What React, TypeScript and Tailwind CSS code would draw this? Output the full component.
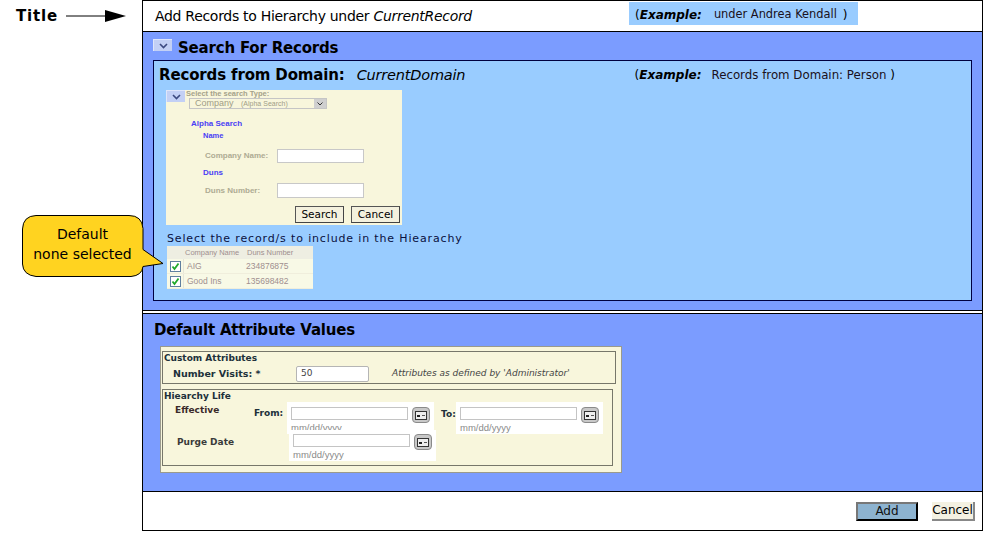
import React from 'react';

const sans = 'font-["DejaVu_Sans",sans-serif]';

function Chevron({ className }: { className: string }) {
  return (
    <div className={`flex items-center justify-center bg-[#c3d0f5] border-t border-l border-[#dfe6fa] ${className}`}>
      <svg width="9" height="6" viewBox="0 0 9 6">
        <path d="M1 1l3.500 3.500L8 1" fill="none" stroke="#3c4a80" strokeWidth="1.600" />
      </svg>
    </div>
  );
}

function CalendarButton() {
  return (
    <div className="flex h-[16px] w-[18px] items-center justify-center rounded-[4px] border border-[#8a8a8a] bg-[#c8c8c8]">
      <svg width="12" height="9" viewBox="0 0 12 9">
        <rect x="0.5" y="0.5" width="11" height="8" fill="#eee" stroke="#333" />
        <rect x="2" y="4" width="3" height="2" fill="#222" />
        <rect x="7" y="4" width="3" height="1" fill="#555" />
      </svg>
    </div>
  );
}

function DateField({ top }: { top: string }) {
  return (
    <div className={`flex gap-[4px] bg-white px-[4px] ${top}`}>
      <div>
        <div className="h-[13px] w-[117px] border border-[#c4c4c4] bg-white" />
        <div className='mt-[1px] text-[9.500px] leading-[13px] text-[#8a8a8a] font-["Liberation_Sans",sans-serif]'>mm/dd/yyyy</div>
      </div>
      <CalendarButton />
    </div>
  );
}

function PanelButton({ label }: { label: string }) {
  return (
    <div className={`flex h-[17px] w-[49px] items-center justify-center border border-t-[#555] border-l-[#555] border-r-[#444] border-b-[#444] bg-[#f4f1de] text-[10.500px] text-black ${sans}`}>
      {label}
    </div>
  );
}

function SearchPanel() {
  return (
    <div className='ml-[12px] mt-[3px] h-[135px] w-[236px] bg-[#f8f6dc] font-["Liberation_Sans",sans-serif]'>
      <div className="flex">
        <Chevron className="h-[12px] w-[19px]" />
        <div>
          <div className="ml-[1px] text-[7.500px] font-bold leading-[8px] text-[#a5a28a]">Select the search Type:</div>
          <div className="ml-[4px] flex h-[11px] w-[138px] items-center justify-between border border-[#c5c5c5] bg-[#f8f6dc] pl-[5px] text-[#a09d86]">
            <span className="text-[9px] leading-[9px]">
              Company <span className="ml-[5px] text-[7px]">(Alpha Search)</span>
            </span>
            <span className="flex h-[9px] w-[12px] items-center justify-center bg-[#cfcfcf]">
              <svg width="6" height="4" viewBox="0 0 6 4"><path d="M.5.5L3 3 5.500.5" fill="none" stroke="#333" /></svg>
            </span>
          </div>
        </div>
      </div>
      <div className="ml-[25px] mt-[10px] text-[8px] font-bold leading-[10px] text-[#4a40f5]">Alpha Search</div>
      <div className="ml-[37px] mt-[2px] text-[7.500px] font-bold leading-[10px] text-[#4a40f5]">Name</div>
      <div className="ml-[39px] mt-[8px] flex items-center">
        <span className="w-[72px] text-[8px] font-bold text-[#aeab93]">Company Name:</span>
        <div className="h-[14px] w-[87px] border border-[#c8c8c8] bg-white" />
      </div>
      <div className="ml-[37px] mt-[5px] text-[8px] font-bold leading-[10px] text-[#4a40f5]">Duns</div>
      <div className="ml-[39px] mt-[5px] flex items-center">
        <span className="w-[72px] text-[8px] font-bold text-[#aeab93]">Duns Number:</span>
        <div className="h-[15px] w-[87px] border border-[#c8c8c8] bg-white" />
      </div>
      <div className="mr-[2px] mt-[8px] flex justify-end gap-[7px]">
        <PanelButton label="Search" />
        <PanelButton label="Cancel" />
      </div>
    </div>
  );
}

function RecordRow({ name, duns }: { name: string; duns: string }) {
  return (
    <div className="flex h-[15px] items-center border-b border-[#f0eedc] bg-[#f8f9e6]">
      <div className="flex h-full w-[17px] justify-center items-center border-r border-[#e6e6d8]">
        <div className="flex h-[11px] w-[11px] items-center justify-center border border-[#5f7f9f] bg-white">
          <svg width="9" height="9" viewBox="0 0 9 9"><path d="M1.500 4.500l2 2.500 4-5.500" fill="none" stroke="#1fa82a" strokeWidth="1.800" /></svg>
        </div>
      </div>
      <span className="ml-[3px] w-[59px] text-[8.500px] text-[#a08f8f]">{name}</span>
      <span className="text-[8.500px] text-[#a08f8f]">{duns}</span>
    </div>
  );
}

function RecordsTable() {
  return (
    <div className='ml-[13px] h-[43px] w-[146px] border-b border-[#c0c0b0] bg-white font-["Liberation_Sans",sans-serif]'>
      <div className="flex h-[13px] items-center bg-[#eeeee2] pl-[18px] text-[7.500px] text-[#a08f8f]">
        <span className="w-[62px]">Company Name</span>
        <span>Duns Number</span>
      </div>
      <RecordRow name="AIG" duns="234876875" />
      <RecordRow name="Good Ins" duns="135698482" />
    </div>
  );
}

function AttributesPanel() {
  return (
    <div className={`ml-[17px] mt-[6px] h-[127px] w-[462px] border border-[#9a9a8c] bg-[#f8f6dc] px-[1px] pt-[4px] text-[9px] ${sans}`}>
      <div className="h-[33px] w-[454px] border border-[#77776a] pl-[1px]">
        <div className="text-[9px] font-bold leading-[12px] text-[#20303a]">Custom Attributes</div>
        <div className="mt-[2px] flex items-center">
          <span className="ml-[9px] w-[123px] text-[9.500px] font-bold text-[#20303a]">Number Visits: *</span>
          <div className="flex h-[16px] w-[73px] items-center rounded-[2px] border border-[#b5b5b5] bg-white pl-[4px] text-[9px] text-[#444]">50</div>
          <span className="ml-[23px] text-[9px] italic text-[#444]">Attributes as defined by 'Administrator'</span>
        </div>
      </div>
      <div className="mt-[5px] h-[77px] w-[451px] border border-[#77776a] pl-[1px]">
        <div className="text-[9px] font-bold leading-[12px] text-[#20303a]">Hiearchy Life</div>
        <div className="flex items-start">
          <div className="ml-[11px] w-[79px] pt-[2px] text-[9px] font-bold text-[#3a2a2a]">Effective</div>
          <div className="mt-[5px] w-[33px] text-[9px] font-bold text-[#20303a]">From:</div>
          <DateField top="pt-[5px]" />
          <div className="ml-[7px] mt-[6px] w-[15px] text-[9px] font-bold text-[#20303a]">To:</div>
          <DateField top="pt-[5px]" />
        </div>
        <div className="-mt-[4px] flex items-start">
          <div className="ml-[13px] w-[112px] pt-[6px] text-[9px] font-bold text-[#3a3a3a]">Purge Date</div>
          <DateField top="pt-[4px]" />
        </div>
      </div>
    </div>
  );
}

export default function App() {
  return (
    <div className={`relative flex h-[544px] w-[999px] overflow-hidden bg-white text-black ${sans}`}>
      {/* Left notes */}
      <div className="w-[142px] shrink-0">
        <div className="flex items-center pl-[16px] pt-[7px]">
          <span className="w-[50px] text-[15px] font-bold leading-[18px] tracking-[0.8px]">Title</span>
          <svg width="61" height="14" viewBox="0 0 61 14">
            <path d="M0 7h42" stroke="#000" strokeWidth="1" />
            <path d="M39 1l21 6-21 6z" fill="#000" />
          </svg>
        </div>
      </div>

      {/* Main frame */}
      <div className="mb-[13px] mr-[17px] flex flex-1 flex-col border border-black">
        <div className="relative flex h-[31px] shrink-0 items-center border-b border-black pl-[12px] pt-[1px]">
          <span className="text-[14px] tracking-[-0.3px]">
            Add Records to Hierarchy under <span className="italic">CurrentRecord</span>
          </span>
          <div className="absolute left-[486px] top-[1px] flex h-[23px] w-[229px] items-center whitespace-nowrap bg-[#99ccff] pl-[6px] pt-[3px] text-[12px]">
            (<span className="font-bold italic">Example:</span>
            <span className="ml-[12px] text-[11.400px] text-[#1a1020]">under Andrea Kendall</span>
            <span className="ml-[6px]">)</span>
          </div>
        </div>

        <div className="h-[279px] shrink-0 border-b border-black bg-[#7b9cff] px-[10px]">
          <div className="flex h-[28px] items-start gap-[6px]">
            <Chevron className="mt-[7px] h-[12px] w-[19px]" />
            <span className="mt-[6px] text-[15px] font-bold leading-[20px] tracking-[-0.2px]">Search For Records</span>
          </div>
          <div className="h-[241px] w-[819px] border border-[#000040] bg-[#99ccff]">
            <div className="flex h-[26px] items-center pl-[5px] pt-[3px]">
              <span className="text-[15px] font-bold tracking-[-0.15px]">Records from Domain:</span>
              <span className="ml-[12px] text-[14.500px] italic tracking-[-0.2px]">CurrentDomain</span>
              <span className="ml-[auto] mr-[76px] whitespace-nowrap text-[12px]">
                (<span className="font-bold italic">Example:</span>
                <span className="ml-[10px] text-[11.800px] text-[#1a1020]">Records from Domain: Person</span> )
              </span>
            </div>
            <SearchPanel />
            <div className="ml-[13px] mt-[7px] text-[11px] leading-[14px] tracking-[0.85px] text-[#0a1040]">
              Select the record/s to include in the Hiearachy
            </div>
            <RecordsTable />
          </div>
        </div>

        <div className="mt-[2px] h-[179px] shrink-0 border-y border-black bg-[#7b9cff]">
          <div className="pl-[11px] pt-[6px] text-[15px] font-bold leading-[20px] tracking-[-0.2px]">Default Attribute Values</div>
          <AttributesPanel />
        </div>

        <div className="flex flex-1 items-center justify-end gap-[14px] pr-[7px]">
          <div className="flex h-[19px] w-[62px] items-center justify-center border-2 border-black border-l-[#777] border-t-[#777] bg-[#8db3d0] text-[12px] text-[#111]">Add</div>
          <div className="flex h-[19px] w-[43px] items-center justify-center border-r-2 border-b-2 border-[#888] bg-[#f4f1e2] text-[12px]">Cancel</div>
        </div>
      </div>

      {/* Callout over the left margin */}
      <div className="absolute left-[22px] top-[215px] h-[62px] w-[142px]">
        <svg className="absolute inset-0" width="142" height="62" viewBox="0 0 142 62">
          <path
            d="M14 .5h93q13 0 14 13v21l20 14-20 3q-1 9-12 10H14Q1 60 .5 49V14Q1 1 14 .5z"
            fill="#ffd320"
            stroke="#000"
          />
        </svg>
        <div className="absolute left-0 top-[9px] w-[121px] text-center text-[14px] leading-[20px] text-black">
          Default<br />none selected
        </div>
      </div>
    </div>
  );
}
